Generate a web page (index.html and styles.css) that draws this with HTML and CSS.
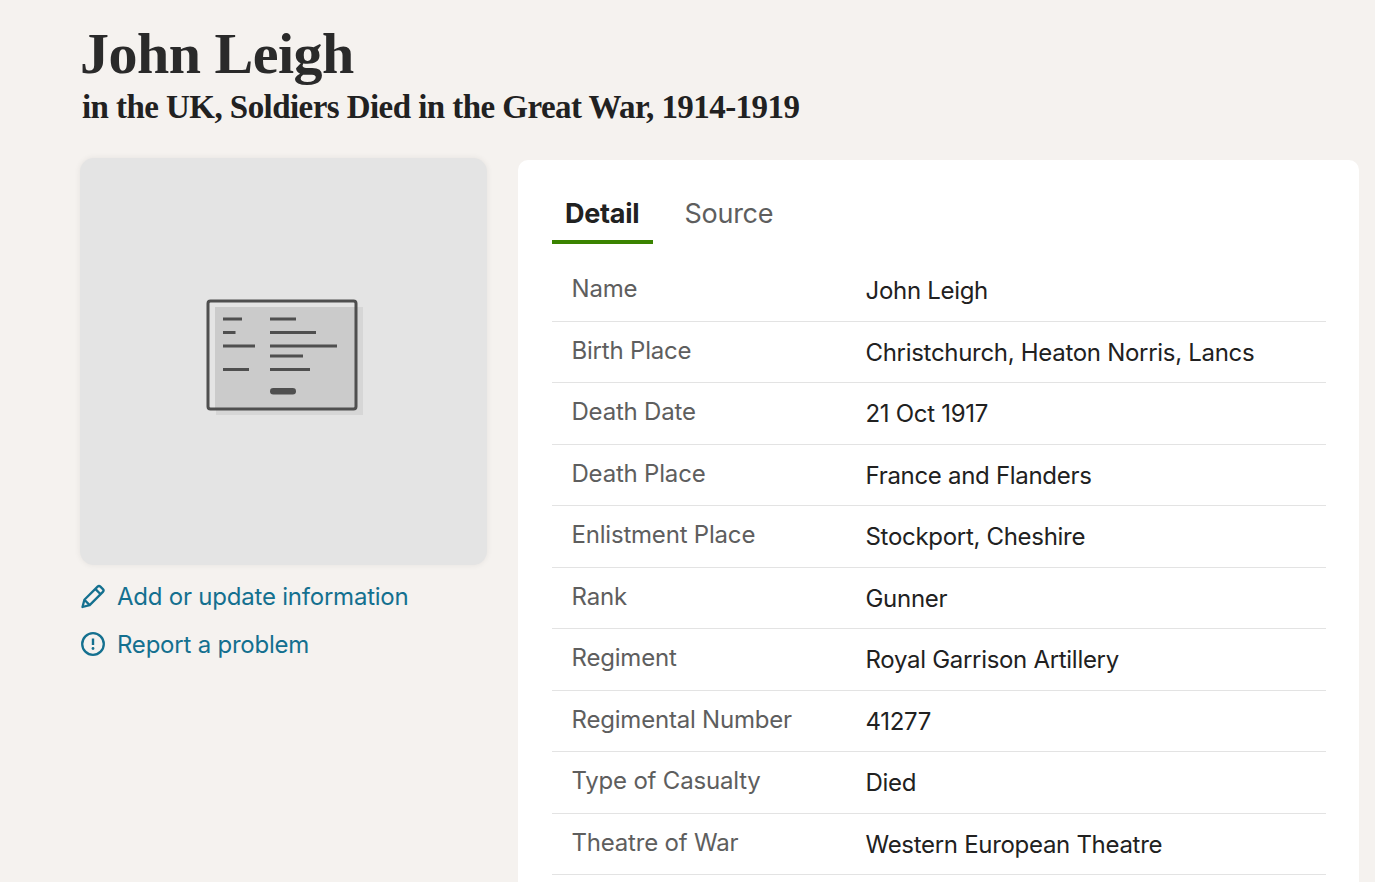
FILE: index.html
```html
<!DOCTYPE html>
<html lang="en">
<head>
<meta charset="utf-8">
<title>John Leigh</title>
<link rel="stylesheet" href="styles.css">
</head>
<body>
<header class="head">
  <h1 class="title">John Leigh</h1>
  <h2 class="subtitle">in the UK, Soldiers Died in the Great War, 1914-1919</h2>
</header>
<main class="layout">
  <aside class="side">
    <div class="thumb">
      <svg class="doc" width="160" height="120" viewBox="0 0 160 120" aria-hidden="true">
        <rect x="10" y="8" width="147" height="108" fill="#cbcbcb" opacity=".55"/>
        <rect x="9" y="8" width="141" height="102" fill="#cbcbcb"/>
        <rect x="2" y="2" width="148" height="108" rx="2.5" fill="none" stroke="#4f4f4f" stroke-width="3"/>
        <g fill="none" stroke="#4f4f4f" stroke-width="3">
          <path d="M17 20H36M17 33.500H29.500M17 47H49M17 70.500H43"/>
          <path d="M64 20H90M64 33.500H110M64 47H131M64 57H97M64 70.500H104"/>
        </g>
        <rect x="64" y="89" width="26" height="6.500" rx="3.250" fill="#4f4f4f"/>
      </svg>
    </div>
    <ul class="actions">
      <li class="action">
        <svg width="26" height="26" viewBox="0 0 26 26" aria-hidden="true"><path d="M2.500 24l1.900-7.200L17.600 3.600a2 2 0 0 1 2.800 0l2.500 2.500a2 2 0 0 1 0 2.800L9.700 22.100zM4.400 16.800l5.300 5.300M15.300 5.900l5.300 5.300" fill="none" stroke="#14708f" stroke-width="2.300" stroke-linejoin="round"/></svg>
        <a class="link" href="#">Add or update information</a>
      </li>
      <li class="action">
        <svg width="26" height="26" viewBox="0 0 26 26" aria-hidden="true"><circle cx="13" cy="13" r="10.800" fill="none" stroke="#14708f" stroke-width="2.300"/><path d="M13 7.500v6.500" stroke="#14708f" stroke-width="2.400"/><circle cx="13" cy="17.500" r="1.400" fill="#14708f"/></svg>
        <a class="link" href="#">Report a problem</a>
      </li>
    </ul>
  </aside>
  <section class="card">
    <nav class="tabs">
      <a class="tab tab-active" href="#">Detail</a>
      <a class="tab" href="#">Source</a>
    </nav>
    <dl class="rows">
      <div class="row"><dt>Name</dt><dd>John Leigh</dd></div>
      <div class="row"><dt>Birth Place</dt><dd>Christchurch, Heaton Norris, Lancs</dd></div>
      <div class="row"><dt>Death Date</dt><dd>21 Oct 1917</dd></div>
      <div class="row"><dt>Death Place</dt><dd>France and Flanders</dd></div>
      <div class="row"><dt>Enlistment Place</dt><dd>Stockport, Cheshire</dd></div>
      <div class="row"><dt>Rank</dt><dd>Gunner</dd></div>
      <div class="row"><dt>Regiment</dt><dd>Royal Garrison Artillery</dd></div>
      <div class="row"><dt>Regimental Number</dt><dd>41277</dd></div>
      <div class="row"><dt>Type of Casualty</dt><dd>Died</dd></div>
      <div class="row"><dt>Theatre of War</dt><dd>Western European Theatre</dd></div>
    </dl>
  </section>
</main>
</body>
</html>
```
FILE: styles.css
```css
* { box-sizing: border-box; }
html, body { height: 882px; overflow: hidden; }
body {
  margin: 0;
  padding: 0 16px 0 80px;
  background: #f5f2ef;
  color: #212121;
  font-family: Inter, "Liberation Sans", sans-serif;
}
.head { padding-top: 22px; }
.title {
  margin: 0;
  font: bold 58px/63px "Liberation Serif", serif;
  letter-spacing: -0.5px;
  color: #2a2a2a;
}
.subtitle {
  margin: 2px 0 0 2px;
  font: bold 33px/40px "Liberation Serif", serif;
  letter-spacing: -0.56px;
  color: #212121;
}
.layout {
  display: flex;
  align-items: flex-start;
  gap: 31px;
  padding-top: 33px;
}
.side { flex: 0 0 407px; }
.thumb {
  width: 407px;
  height: 407px;
  margin-top: -2px;
  border-radius: 14px;
  background: #e4e4e4;
  box-shadow: 0 0 6px rgba(0, 0, 0, .07);
  display: flex;
  align-items: center;
  justify-content: center;
}
.doc { margin: 0 0 6px 4px; }
.actions { list-style: none; margin: 7px 0 0; padding: 0; }
.action {
  display: flex;
  align-items: center;
  gap: 11px;
  height: 48px;
}
.link {
  color: #14708f;
  font-size: 24px;
  text-decoration: none;
  letter-spacing: -0.22px;
}
.card {
  flex: 0 0 841px;
  height: 760px;
  padding: 30px 33px 0 34px;
  background: #fff;
  border-radius: 10px;
}
.tabs { display: flex; height: 54px; }
.tab {
  padding: 8px 13px 0;
  font-size: 27px;
  line-height: 32px;
  color: #5e5e5e;
  text-decoration: none;
  letter-spacing: -0.25px;
}
.tab-active {
  padding-right: 14px;
  font-weight: 700;
  color: #212121;
  border-bottom: 4px solid #3a8300;
  margin-right: 18px;
}
.rows { margin: 16px 0 0; }
.row {
  display: flex;
  height: 61.5px;
  border-bottom: 1px solid #e3e3e3;
  font-size: 24px;
}
.row dt {
  flex: 0 0 313.5px;
  padding: 14px 0 0 19.5px;
  color: #5e5e5e;
  letter-spacing: -0.2px;
  line-height: 30px;
}
.row dd {
  margin: 0;
  padding: 16px 0 0;
  color: #212121;
  letter-spacing: -0.3px;
  line-height: 30px;
}
```
